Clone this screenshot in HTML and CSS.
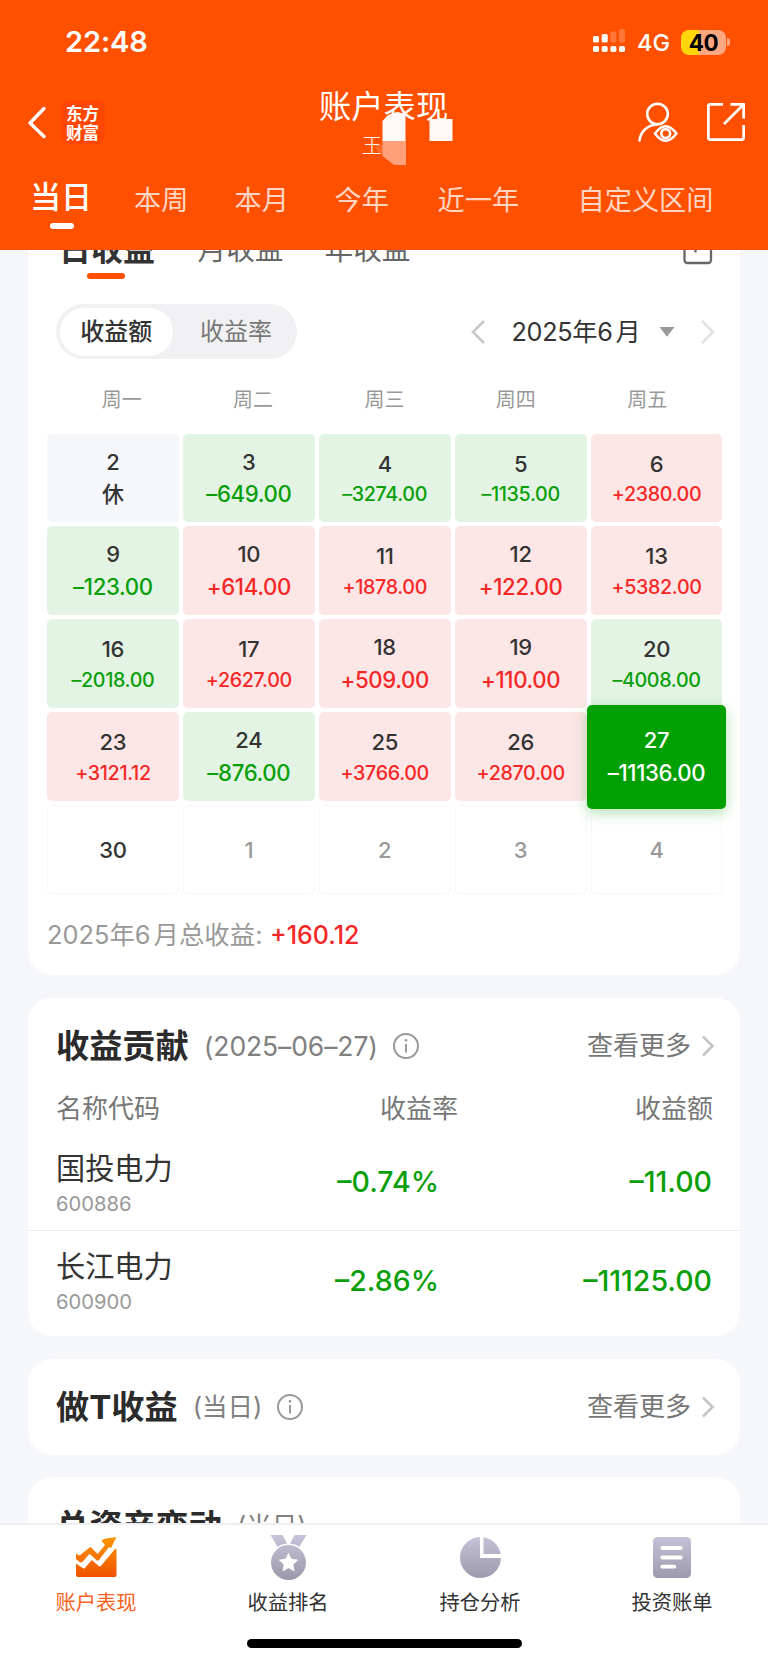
FILE: index.html
```html
<!DOCTYPE html>
<html lang="zh-CN">
<head>
<meta charset="utf-8">
<title>账户表现</title>
<link rel="stylesheet" href="styles.css">
</head>
<body>
<header class="header">
  <div class="status">
    <span class="clock">22:48</span>
    <svg class="signal" width="34" height="26" viewBox="0 0 34 26">
      <g fill="#fff">
        <rect x="1" y="8" width="6" height="6.5" rx="1.5"/><rect x="9.7" y="6" width="6" height="8.5" rx="1.5"/>
        <rect x="1" y="18" width="6" height="6" rx="1.8"/><rect x="9.7" y="18" width="6" height="6" rx="1.8"/>
        <rect x="18.4" y="18" width="6" height="6" rx="1.8"/><rect x="27" y="18" width="6" height="6" rx="1.8"/>
      </g>
      <g fill="#ff7638"><rect x="18.4" y="3.5" width="6" height="11" rx="1.5"/><rect x="27" y="1" width="6" height="13.5" rx="1.5"/></g>
    </svg>
    <span class="net">4G</span>
    <span class="battery">40</span><span class="nub"></span>
  </div>
  <div class="nav">
    <svg class="back" width="20" height="36" viewBox="0 0 20 36"><path d="M17 3.5 3 18l14 13.5" fill="none" stroke="#fff" stroke-width="3.4" stroke-linecap="round" stroke-linejoin="round"/></svg>
    <div class="logo"><span>东方</span><span>财富</span></div>
    <div class="title-box">
      <div class="title">账户表现</div>
      <div class="name">王</div>
      <svg class="mask" width="76" height="60" viewBox="0 0 76 60">
        <path d="M1 34h9v11L3 40z" fill="#ff6a2a"/>
        <path d="M8.500 10 14 4l9-3 8 2v27H8.500z" fill="#fffaf8"/>
        <path d="M8.500 30H32v24H20L8.500 45z" fill="#ffa07a"/>
        <path d="M31.500 3.500V30H23V1z" fill="#fffaf8"/>
        <path d="M55.500 8h23v22h-23z" fill="#fffaf8"/>
      </svg>
    </div>
    <svg class="user" width="44" height="44" viewBox="0 0 44 44" fill="none" stroke="#fff" stroke-width="2.6" stroke-linecap="round">
      <circle cx="21.500" cy="13" r="10.300"/>
      <path d="M21 23.500C11 24 4.500 31 3.500 39.500"/>
      <path d="M19 32.500q10.500-14.500 21.500 0-11 14.500-21.500 0z" stroke-linejoin="round"/>
      <circle cx="29.700" cy="32.500" r="4.400"/>
    </svg>
    <svg class="export" width="40" height="40" viewBox="0 0 40 40" fill="none" stroke="#fff" stroke-width="2.7">
      <path d="M17 2.400H4.200a1.800 1.800 0 0 0-1.800 1.800v31.600a1.800 1.800 0 0 0 1.800 1.800h31.600a1.800 1.800 0 0 0 1.800-1.800V23"/>
      <path d="M24.500 2.400h13.100v14M37 3 18 22"/>
    </svg>
  </div>
  <nav class="tabs">
    <span class="tab active">当日</span><span class="tab">本周</span><span class="tab">本月</span><span class="tab">今年</span><span class="tab">近一年</span><span class="tab">自定义区间</span>
  </nav>
</header>

<main class="main">
  <section class="card calendar">
    <div class="subtabs">
      <span class="sub active">日收益</span><span class="sub">月收益</span><span class="sub">年收益</span>
      <svg width="30" height="30" viewBox="0 0 30 30" fill="none" stroke="#666" stroke-width="2.300"><rect x="1.500" y="1.500" width="26.500" height="26.500" rx="3"/><path d="M12.500 17.500V9"/></svg>
    </div>
    <div class="controls">
      <div class="pill"><span class="on">收益额</span><span class="off">收益率</span></div>
      <svg class="prev" width="16" height="26" viewBox="0 0 16 26"><path d="M14 2 3 13l11 11" fill="none" stroke="#c9c9c9" stroke-width="2.600"/></svg>
      <span class="month">2025年<span class="m6">6</span>月</span>
      <svg class="tri" width="16" height="10" viewBox="0 0 16 10"><path d="M.5 0h15L8 9.800z" fill="#999"/></svg>
      <svg class="next" width="16" height="26" viewBox="0 0 16 26"><path d="M2 2l11 11L2 24" fill="none" stroke="#e2e2e2" stroke-width="2.600"/></svg>
    </div>
    <div class="week"><span>周一</span><span>周二</span><span>周三</span><span>周四</span><span>周五</span></div>
    <div class="days">
      <div class="day rest"><b>2</b><i>休</i></div>
      <div class="day down"><b>3</b><i>–649.00</i></div>
      <div class="day down small"><b>4</b><i>–3274.00</i></div>
      <div class="day down small"><b>5</b><i>–1135.00</i></div>
      <div class="day up small"><b>6</b><i>+2380.00</i></div>
      <div class="day down"><b>9</b><i>–123.00</i></div>
      <div class="day up"><b>10</b><i>+614.00</i></div>
      <div class="day up small"><b>11</b><i>+1878.00</i></div>
      <div class="day up"><b>12</b><i>+122.00</i></div>
      <div class="day up small"><b>13</b><i>+5382.00</i></div>
      <div class="day down small"><b>16</b><i>–2018.00</i></div>
      <div class="day up small"><b>17</b><i>+2627.00</i></div>
      <div class="day up"><b>18</b><i>+509.00</i></div>
      <div class="day up"><b>19</b><i>+110.00</i></div>
      <div class="day down small"><b>20</b><i>–4008.00</i></div>
      <div class="day up small"><b>23</b><i>+3121.12</i></div>
      <div class="day down"><b>24</b><i>–876.00</i></div>
      <div class="day up small"><b>25</b><i>+3766.00</i></div>
      <div class="day up small"><b>26</b><i>+2870.00</i></div>
      <div class="day selected"><b>27</b><i>–11136.00</i></div>
      <div class="day blank"><b>30</b></div>
      <div class="day blank other"><b>1</b></div>
      <div class="day blank other"><b>2</b></div>
      <div class="day blank other"><b>3</b></div>
      <div class="day blank other"><b>4</b></div>
    </div>
    <div class="summary"><span class="sum-label">2025年<span class="m6">6</span>月总收益:</span><span class="sum-value">+160.12</span></div>
  </section>

  <section class="card contrib">
    <div class="card-head">
      <h2>收益贡献</h2><span class="note date">(2025–06–27)</span>
      <svg class="info" width="28" height="28" viewBox="0 0 28 28" fill="none" stroke="#999" stroke-width="2"><circle cx="14" cy="14" r="12"/><path d="M14 12v8.500"/><circle cx="14" cy="8.300" r="1.300" fill="#999" stroke="none"/></svg>
      <span class="more">查看更多</span>
      <svg class="arrow" width="14" height="22" viewBox="0 0 14 22"><path d="M2 1.500 11.500 11 2 20.500" fill="none" stroke="#c4c4c4" stroke-width="2.500"/></svg>
    </div>
    <div class="thead"><span>名称代码</span><span>收益率</span><span>收益额</span></div>
    <div class="row"><div class="stock"><span class="sname">国投电力</span><span class="code">600886</span></div><span class="num">–0.74%</span><span class="num">–11.00</span></div>
    <div class="row last"><div class="stock"><span class="sname">长江电力</span><span class="code">600900</span></div><span class="num">–2.86%</span><span class="num">–11125.00</span></div>
  </section>

  <section class="card tprofit">
    <div class="card-head">
      <h2>做T收益</h2><span class="note">(当日)</span>
      <svg class="info" width="28" height="28" viewBox="0 0 28 28" fill="none" stroke="#999" stroke-width="2"><circle cx="14" cy="14" r="12"/><path d="M14 12v8.500"/><circle cx="14" cy="8.300" r="1.300" fill="#999" stroke="none"/></svg>
      <span class="more">查看更多</span>
      <svg class="arrow" width="14" height="22" viewBox="0 0 14 22"><path d="M2 1.500 11.500 11 2 20.500" fill="none" stroke="#c4c4c4" stroke-width="2.500"/></svg>
    </div>
  </section>

  <section class="card assets">
    <div class="card-head"><h2>总资产变动</h2><span class="note">(当日)</span></div>
  </section>
</main>

<footer class="bar">
  <svg width="0" height="0" class="defs"><defs>
    <linearGradient id="gray" x1="0" y1="0" x2="0" y2="44" gradientUnits="userSpaceOnUse"><stop offset="0" stop-color="#c6c4d8"/><stop offset="1" stop-color="#9c99ac"/></linearGradient>
    <linearGradient id="fire" x1="0" y1="3" x2="0" y2="43" gradientUnits="userSpaceOnUse"><stop offset="0" stop-color="#fa9600"/><stop offset="1" stop-color="#f05000"/></linearGradient>
  </defs></svg>
  <div class="items">
    <div class="item current">
      <svg width="46" height="46" viewBox="0 0 46 46" fill="url(#fire)"><path d="M3 18.500 6.500 20.500 16.500 12.500q1-.8 2 .2l6 6.300 7.500-9-3.500-4.200Q30 4 33 3.600L43.500 2 38 13l-2-1-10 13q-1.200 1.300-2.400.2l-7-6.400-7 8Q8 28 6.500 27L3 24z"/><path d="M3 28.500l7 4.800q1 .7 1.800-.3l7-8 7 6q1.200.9 2.200-.3L42 14q1.500-1 1.500 1v25q0 2-2 2H5q-2 0-2-2z"/></svg>
      <span>账户表现</span>
    </div>
    <div class="item">
      <svg width="46" height="46" viewBox="0 0 46 46" fill="url(#gray)"><path d="M5.500 0h12l4.500 8.500a20 20 0 0 0-9.500 3.200zM29.500 0h12l-7 11.700a20 20 0 0 0-9.500-3.200z"/><path fill-rule="evenodd" d="M23.500 10a17.500 17.500 0 1 1 0 35 17.500 17.500 0 0 1 0-35zm0 7.500-3 6.300-6.800.9 5 4.800-1.200 6.900 6-3.300 6 3.300-1.200-6.900 5-4.800-6.800-.9z"/></svg>
      <span>收益排名</span>
    </div>
    <div class="item">
      <svg width="46" height="46" viewBox="0 0 46 46" fill="url(#gray)"><path d="M23 2v21h21A20.500 20.500 0 1 1 23 2z"/><path d="M26.500 2.200A20.500 20.500 0 0 1 43.600 19H26.500z"/></svg>
      <span>持仓分析</span>
    </div>
    <div class="item">
      <svg width="46" height="46" viewBox="0 0 46 46"><rect x="4" y="2" width="38" height="41" rx="4.500" fill="url(#gray)"/><path d="M13.300 13h18.500M13.300 22.500h18.500M13.300 31.700h12" stroke="#fff" stroke-width="3.800" stroke-linecap="round"/></svg>
      <span>投资账单</span>
    </div>
  </div>
  <div class="home"></div>
</footer>
</body>
</html>
```
FILE: styles.css
```css
* { box-sizing: border-box; }
body { margin: 0; width: 768px; height: 1664px; overflow: hidden; background: #f6f7fa; font-family: Inter, "Noto Sans CJK SC", sans-serif; color: #333; white-space: nowrap; }
svg { display: block; flex: none; }

/* Header */
.header { height: 250px; background: #ff5000; color: #fff; overflow: hidden; }
.status { display: flex; align-items: center; height: 84px; padding-left: 65px; }
.clock { width: 527px; font-size: 29px; font-weight: 600; line-height: 40px; letter-spacing: -0.1px; }
.signal { margin-top: -2px; }
.net { width: 43px; margin: 2px 0 0 11px; font-size: 23.5px; font-weight: 500; line-height: 30px; }
.battery { width: 45px; height: 25px; margin-left: 1px; border-radius: 8px; background: linear-gradient(90deg, #ffd60a 40%, #ffa780 40%); color: #000; font-size: 22.500px; font-weight: 700; line-height: 25px; text-align: center; letter-spacing: -0.4px; }
.nub { width: 3px; height: 8px; margin-left: 1px; border-radius: 0 3px 3px 0; background: #ffa780; }
.nav { display: flex; height: 86px; padding-left: 27px; }
.back { margin-top: 21px; }
.logo { display: flex; flex-direction: column; width: 44px; height: 44px; margin: 16px 0 0 13.500px; padding-top: 4px; border-radius: 8px; background: #ff4703; font-family: "Noto Sans CJK SC", sans-serif; font-size: 16.500px; font-weight: 700; line-height: 18.500px; text-align: center; }
.title-box { position: relative; width: 140px; height: 86px; margin-left: 209.500px; padding-left: 5px; }
.title { margin-top: 1.500px; font-size: 32.300px; font-weight: 400; line-height: 42px; }
.name { margin: 5px 0 0 43px; font-size: 20px; font-weight: 300; line-height: 26px; }
.mask { position: absolute; left: 60px; top: 27px; overflow: visible; }
.user { margin: 17px 0 0 182px; }
.export { margin: 18px 0 0 25.500px; }
.tabs { display: grid; grid-template-columns: 104px 100.500px 100px 103px 140px auto; padding-left: 30px; height: 80px; align-items: start; }
.tab { padding-top: 11px; font-size: 27.200px; font-weight: 400; line-height: 40px; color: #ffd5c3; }
.tab.active { padding-top: 7px; font-size: 31px; font-weight: 500; color: #fff; }
.tab.active::after { content: ""; display: block; width: 24px; height: 6px; margin: 6px 0 0 19.500px; border-radius: 3px; background: #fff; }

/* Cards */
.main { display: flex; flex-direction: column; gap: 22.500px; height: 1273px; padding: 0 28px; overflow: hidden; }
.card { flex: none; border-radius: 24px; background: #fff; }
.calendar { height: 725px; border-radius: 0 0 24px 24px; }
.subtabs { display: grid; grid-template-columns: 138.500px 127px 358.500px auto; height: 54px; padding-left: 31px; }
.subtabs svg { margin-top: -15px; }
.sub { margin-top: -20px; font-size: 28.700px; line-height: 40px; color: #666; }
.sub.active { font-size: 32px; font-weight: 700; color: #333; }
.sub.active::after { content: ""; display: block; width: 38px; height: 6px; margin: 3px 0 0 28px; border-radius: 3px; background: #ff5000; }
.controls { display: flex; align-items: center; height: 55px; padding-left: 28px; }
.pill { display: flex; width: 241px; height: 55px; padding: 3.500px; border-radius: 28px; background: #f1f1f4; font-size: 24px; line-height: 48px; }
.pill .on { width: 113.500px; border-radius: 24px; background: #fff; font-weight: 500; text-align: center; }
.pill .off { margin-left: 27px; color: #777; }
.prev { margin-left: 172.500px; }
.month { width: 147px; margin-left: 26px; font-size: 25.200px; line-height: 40px; letter-spacing: -0.3px; }
.m6 { margin-right: 3px; }
.tri { margin-left: 0; }
.next { margin-left: 25px; }
.week { display: grid; grid-template-columns: repeat(5, 131.400px); padding: 26px 0 0 28px; height: 74.500px; font-size: 20px; line-height: 30px; color: #999; text-align: center; }
.days { display: grid; grid-template: repeat(5, 88.900px) / repeat(5, 131.900px); gap: 4px; margin: 0 0 0 19px; }
.day { display: flex; flex-direction: column; align-items: center; padding-top: 14px; border-radius: 5px; }
.day b { font-size: 22px; font-weight: 500; line-height: 28px; letter-spacing: -0.3px; }
.day i { margin-top: 1.500px; font-size: 22.200px; font-style: normal; font-weight: 550; line-height: 34px; letter-spacing: -0.35px; }
.small { padding-top: 16px; }
.small i { font-size: 19.700px; line-height: 31px; }
.rest { background: #f6f7fa; }
.rest i { font-size: 22px; line-height: 35px; }
.down { background: #e3f4e4; }
.down i { color: #0a9f0a; }
.up { background: #fde6e6; }
.up i { color: #f52828; }
.selected { z-index: 1; margin: -7.500px -4px -7.500px -4px; padding-top: 21.500px; background: #00a000; color: #fff; box-shadow: 0 4px 14px rgba(0, 160, 0, 0.3); }
.blank { padding-top: 29.500px; border: 1.500px solid #f7f7f9; }
.other { color: #999; }
.summary { display: flex; padding: 21px 0 0 19px; line-height: 40px; }
.sum-label { width: 223px; font-size: 25.400px; color: #999; }
.sum-value { font-size: 25px; font-weight: 550; color: #f52828; }

/* Detail cards */
.card-head { display: flex; align-items: center; height: 97px; padding: 0 25px 0 28px; }
h2 { margin: 0; font-size: 33.200px; font-weight: 700; line-height: 46px; color: #2b2b2b; }
.note { margin-left: 15px; font-size: 25.500px; font-weight: 400; line-height: 40px; color: #808080; }
.date { font-size: 26.500px; letter-spacing: -0.1px; }
.info { margin-left: 14px; }
.more { margin-left: auto; font-size: 26px; line-height: 40px; color: #777; }
.arrow { margin-left: 10px; }
.contrib { height: 338.500px; }
.thead { display: grid; grid-template-columns: 200px 202px 255px; height: 38px; margin-left: 28px; font-size: 26px; line-height: 27px; color: #777; }
.thead span + span { text-align: right; }
.row { display: grid; grid-template-columns: 200px 183px 273px; height: 98.500px; padding-left: 28px; border-bottom: 1.500px solid #ededf0; }
.row.last { border: 0; }
.stock { display: flex; flex-direction: column; padding-top: 15px; }
.sname { font-size: 29.200px; line-height: 42px; }
.code { font-size: 20.200px; line-height: 28px; color: #999; }
.num { padding-top: 29.500px; font-size: 28.500px; font-weight: 550; line-height: 40px; color: #0a9f0a; text-align: right; }
.tprofit { height: 96px; }
.assets { height: 180px; }

/* Bottom bar */
.bar { height: 141px; border-top: 2px solid #efeff1; background: #fff; }
.defs { position: absolute; }
.items { display: grid; grid-template-columns: repeat(4, 1fr); }
.item { display: flex; flex-direction: column; align-items: center; padding-top: 10px; font-size: 20.300px; line-height: 30px; }
.item span { margin-top: 7px; }
.current { color: #f4641e; }
.home { width: 275px; height: 9px; margin: 21px auto 0; border-radius: 5px; background: #000; }
```
